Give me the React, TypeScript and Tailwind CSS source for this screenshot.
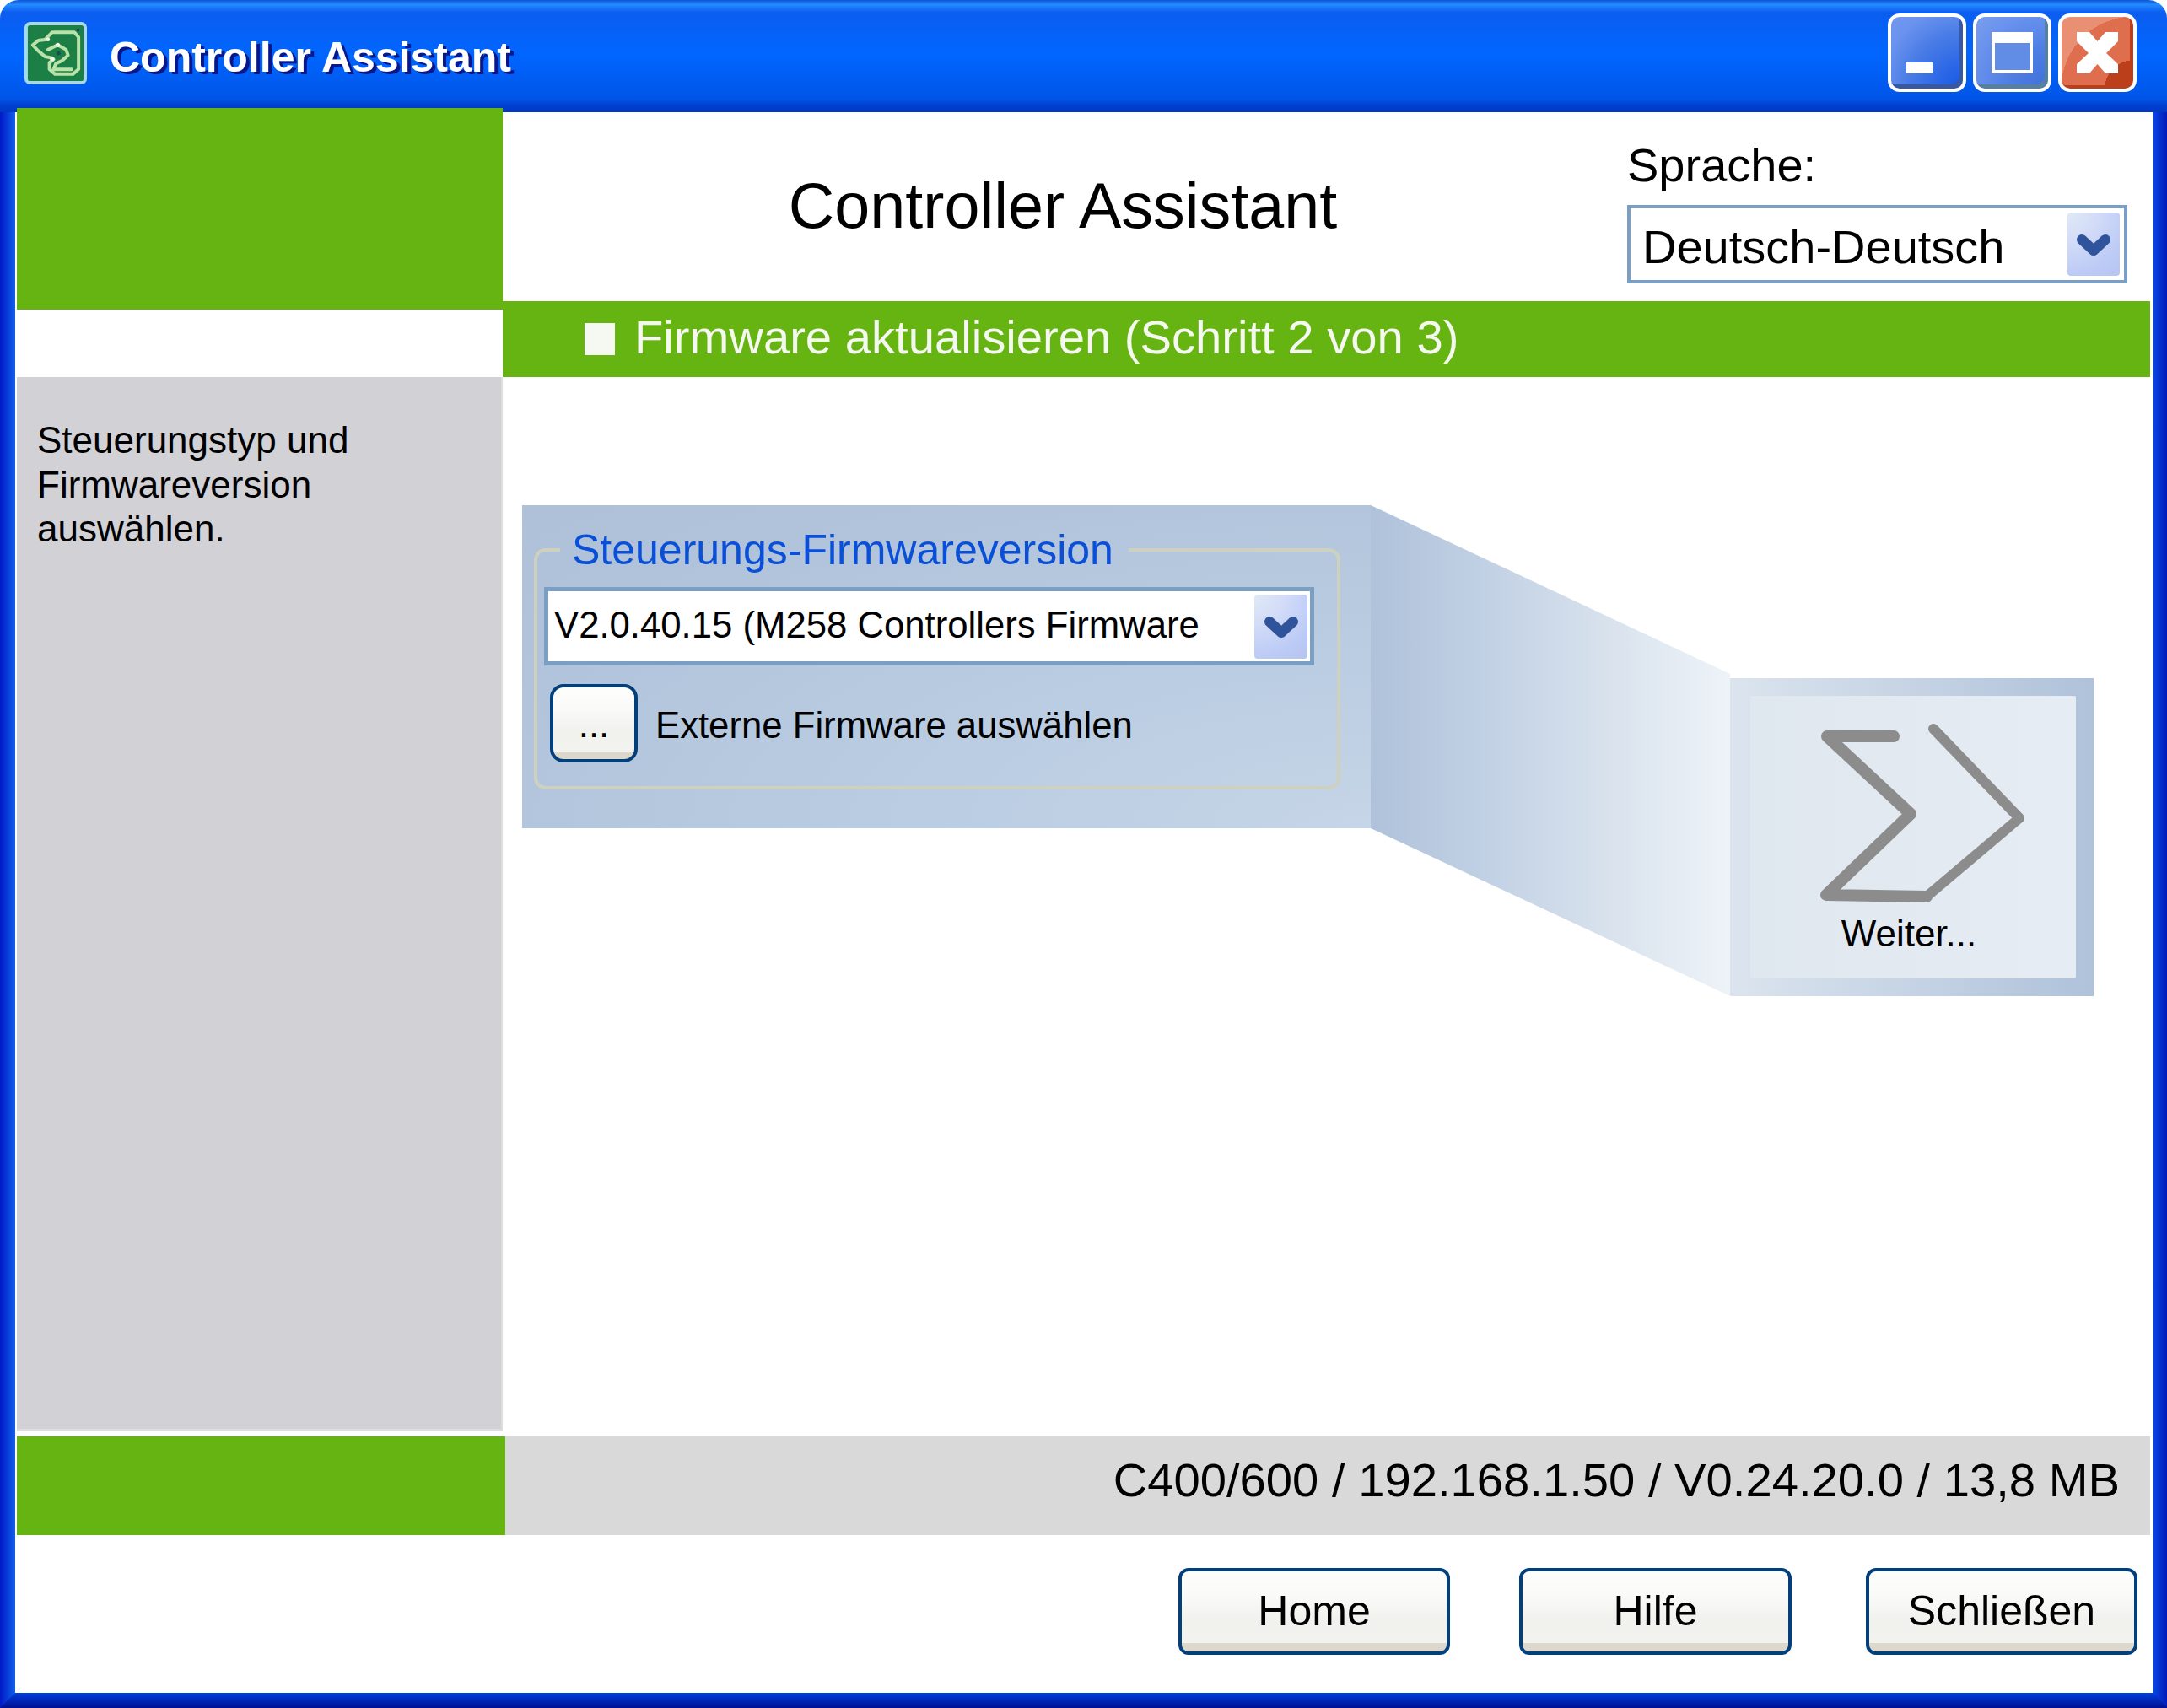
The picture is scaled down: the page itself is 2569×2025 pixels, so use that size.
import React from "react";

const Chevron = () => (
  <svg width="42" height="28" viewBox="0 0 42 28" fill="none">
    <path d="M7 8 L21 21 L35 8" stroke="#30549c" strokeWidth="12" strokeLinejoin="round" strokeLinecap="round" />
  </svg>
);

const AppIcon = () => (
  <svg width="74" height="74" viewBox="25 25 225 225" fill="none">
    <rect x="31" y="31" width="213" height="213" rx="14" fill="#1c7f45" stroke="#a6d8ea" strokeWidth="12" />
    <g stroke="#b9e2a8" strokeWidth="12" strokeLinejoin="round" strokeLinecap="round">
      <path d="M100 88 L125 62 L205 62 L220 80 L220 195 L200 213 L135 213 L115 195 L115 172 L130 160" />
      <path d="M105 88 L75 92 L55 108 L75 130 L100 150 L125 155" />
      <path d="M110 125 L145 108 L175 125 L182 145 L160 165 L138 175 L130 196 L195 196" />
    </g>
    <circle cx="148" cy="138" r="7" fill="#1a4d5a" />
    <circle cx="218" cy="54" r="6" fill="#1a4d5a" />
    <circle cx="110" cy="88" r="7" fill="#eef8e8" />
    <circle cx="145" cy="108" r="8" fill="#eef8e8" />
    <circle cx="125" cy="158" r="8" fill="#eef8e8" />
  </svg>
);

const WindowButton = ({ className, children }: { className: string; children: React.ReactNode }) => (
  <div className={`box-border flex h-[93px] w-[93px] rounded-[14px] border-[4px] border-white ${className}`}>{children}</div>
);

const ActionButton = ({ label, width }: { label: string; width: string }) => (
  <button
    className={`box-border flex h-[103px] ${width} items-center justify-center rounded-[12px] border-[4px] border-[#033f7a] bg-[linear-gradient(180deg,#fdfdfc_0%,#fafaf8_30%,#f1f2ee_60%,#f2f2ee_89%,#ddd8ce_90%,#ddd8ce_100%)] pb-[2px] text-[50px] leading-none text-black`}
  >
    {label}
  </button>
);

export default function App() {
  return (
    <div className="flex h-[2025px] w-[2569px] flex-col overflow-hidden bg-white font-['Liberation_Sans',Arial,sans-serif] text-black">
      {/* title bar */}
      <div className="flex h-[133px] shrink-0 items-center rounded-t-[22px] bg-[linear-gradient(180deg,#0b55d8_0%,#258bff_4%,#0c5df0_11%,#0066ff_48%,#0055e8_88%,#0040d0_94%,#0038c4_100%)] pb-[8px] pl-[29px] pr-[36px]">
        <AppIcon />
        <span className="ml-[27px] mt-[11px] text-[50px] font-bold leading-none text-white [text-shadow:4px_3px_0_#08188c]">
          Controller Assistant
        </span>
        <div className="ml-auto flex gap-[8px]">
          <WindowButton className="items-end bg-[radial-gradient(circle_at_100%_100%,#1558e6_0%,#2c68e6_25%,#4a7ce6_55%,#6a92ee_80%,#7598f0_100%)] pb-[18px] pl-[18px] shadow-[inset_-4px_-5px_0_#38599f]">
            <div className="h-[13px] w-[31px] bg-white" />
          </WindowButton>
          <WindowButton className="items-start justify-center bg-[radial-gradient(circle_at_100%_100%,#3f70da_0%,#4f7fe4_40%,#6a92ee_75%,#7b9ded_100%)] pt-[18px] shadow-[inset_-4px_-5px_0_#56809f]">
            <div className="box-border h-[49px] w-[49px] border-[4px] border-t-[13px] border-white bg-[#628de6]" />
          </WindowButton>
          <WindowButton className="items-start justify-center bg-[radial-gradient(circle_at_100%_100%,#bc3f1c_0%,#bc3f1c_28%,#df6e4e_28%,#df6e4e_71%,#e88f74_71%,#e88f74_100%)] pt-[18px] shadow-[inset_-4px_-4px_0_#bc3f1c]">
            <svg width="49" height="49" viewBox="0 0 49 49">
              <polygon
                fill="#fff"
                points="0,0 15,0 24.5,11 34,0 49,0 49,11 35,25 49,38 49,49 34,49 24.5,38 15,49 0,49 0,38 14,25 0,11"
              />
            </svg>
          </WindowButton>
        </div>
      </div>

      <div className="flex flex-1">
        <div className="w-[18px] shrink-0 bg-[linear-gradient(90deg,#0018c8,#1060ea)]" />

        <div className="flex w-[2534px] shrink-0 flex-col">
          {/* header */}
          <div className="flex h-[314px] shrink-0">
            <div className="relative z-10 ml-[2px] mt-[-5px] h-[239px] w-[576px] shrink-0 bg-[#65b412]" />
            <div className="flex w-[1956px] flex-col">
              <div className="flex h-[224px] shrink-0">
                <div className="flex w-[1328px] items-center justify-center text-[75.5px] leading-none">
                  Controller Assistant
                </div>
                <div className="ml-[5px] flex flex-col">
                  <div className="pt-[31px] text-[56px] leading-[64px]">Sprache:</div>
                  <div className="mt-[15px] box-border flex h-[93px] w-[593px] items-center border-[4px] border-[#7a9fc3] bg-white pl-[14px] pr-[5px]">
                    <span className="mt-[7px] flex-1 text-[56px] leading-none">Deutsch-Deutsch</span>
                    <div className="flex h-[75px] w-[62px] items-center justify-center rounded-[4px] bg-[radial-gradient(circle_at_0%_0%,#dfe9f5_0%,#d3dcf8_35%,#bccbf6_75%,#b5c5ee_100%)]">
                      <Chevron />
                    </div>
                  </div>
                </div>
              </div>
              <div className="flex h-[90px] w-[1953px] items-center gap-[23px] bg-[#65b412] pl-[97px] text-[56.2px] leading-none text-[#f4f8ee]">
                <div className="h-[38px] w-[36px] bg-[#f6f8f2]" />
                <span className="mb-[3px]">Firmware aktualisieren (Schritt 2 von 3)</span>
              </div>
            </div>
          </div>

          {/* body */}
          <div className="flex h-[1249px] shrink-0">
            <div className="ml-[2px] box-border w-[576px] shrink-0 border-b-[2px] border-r-[2px] border-[#dededf] bg-[#d2d1d6] pl-[24px] pr-[24px] pt-[49px] text-[44px] leading-[52.5px]">
              Steuerungstyp und Firmwareversion auswählen.
            </div>
            <div className="flex items-start pl-[23px] pt-[152px]">
              <div className="box-border h-[383px] w-[1006px] shrink-0 bg-[radial-gradient(ellipse_at_100%_100%,#c6d5e7_0%,#b8cbe1_45%,#b0c3da_80%,#aec1d9_100%)] pl-[14px] pt-[25px]">
                <fieldset className="box-border w-[956px] rounded-[14px] border-[4px] border-[#cfd1c0] pb-[28px] pl-[8px]">
                  <legend className="ml-[19px] pl-[14px] pr-[18px] text-[50px] leading-[56px] text-[#0a4fd8]">
                    Steuerungs-Firmwareversion
                  </legend>
                  <div className="mt-[16px] box-border flex h-[93px] w-[913px] items-center border-[5px] border-[#7a9fc3] bg-white pl-[7px] pr-[3px]">
                    <span className="mb-[3px] flex-1 text-[43.7px] leading-none">V2.0.40.15 (M258 Controllers Firmware</span>
                    <div className="flex h-[76px] w-[63px] items-center justify-center rounded-[4px] bg-[radial-gradient(circle_at_0%_0%,#dfe9f5_0%,#d3dcf8_35%,#bccbf6_75%,#b5c5ee_100%)]">
                      <Chevron />
                    </div>
                  </div>
                  <div className="ml-[7px] mt-[22px] flex items-center">
                    <button className="box-border flex h-[93px] w-[104px] items-center justify-center rounded-[16px] border-[4px] border-[#033f7a] bg-[linear-gradient(180deg,#fdfdfc_0%,#fafaf8_30%,#f1f2ee_60%,#f2f2ee_89%,#ddd8ce_90%,#ddd8ce_100%)] pt-[2px] text-[44px] leading-none text-black">
                      ...
                    </button>
                    <span className="ml-[21px] mt-[5px] text-[43.7px] leading-none">Externe Firmware auswählen</span>
                  </div>
                </fieldset>
              </div>
              <svg width="426" height="582" viewBox="0 0 426 582" className="shrink-0">
                <defs>
                  <linearGradient id="funnel" x1="0" y1="0" x2="1" y2="0">
                    <stop offset="0" stopColor="#afc2da" />
                    <stop offset="0.35" stopColor="#c3d2e5" />
                    <stop offset="0.7" stopColor="#dbe4ee" />
                    <stop offset="1" stopColor="#eef3f8" />
                  </linearGradient>
                </defs>
                <polygon points="0,0 426,200 426,582 0,383" fill="url(#funnel)" />
              </svg>
              <div className="mt-[205px] box-border flex h-[377px] w-[431px] shrink-0 items-start bg-[linear-gradient(90deg,#dbe4ee,#afc2da)] pl-[24px] pt-[21px]">
                <div className="flex h-[335px] w-[386px] flex-col items-center rounded-[2px] bg-[linear-gradient(90deg,#dfe7ef,#e6ecf3)]">
                  <svg width="386" height="260" viewBox="0 0 386 260" fill="none" className="shrink-0">
                    <path
                      d="M170 48 L91 48 L190 140 L90 236 L209 238"
                      stroke="#8c8c8c"
                      strokeWidth="14"
                      strokeLinejoin="round"
                      strokeLinecap="round"
                    />
                    <path
                      d="M209 238 L319 145 L217 39"
                      stroke="#8c8c8c"
                      strokeWidth="12"
                      strokeLinejoin="round"
                      strokeLinecap="round"
                    />
                  </svg>
                  <span className="mr-[10px] text-[44px] leading-none">Weiter...</span>
                </div>
              </div>
            </div>
          </div>

          {/* status */}
          <div className="mt-[7px] flex h-[117px] shrink-0">
            <div className="ml-[2px] w-[579px] shrink-0 bg-[#65b412]" />
            <div className="flex w-[1950px] items-start justify-end bg-[#d9d9d9] pr-[36px] pt-[19px] text-[56.2px] leading-[66px]">
              C400/600 / 192.168.1.50 / V0.24.20.0 / 13,8 MB
            </div>
          </div>

          {/* footer */}
          <div className="flex flex-1 items-start justify-end pr-[18px] pt-[39px]">
            <ActionButton label="Home" width="w-[322px]" />
            <div className="w-[82px]" />
            <ActionButton label="Hilfe" width="w-[323px]" />
            <div className="w-[88px]" />
            <ActionButton label="Schließen" width="w-[322px]" />
          </div>

          <div className="relative z-10 -mx-[18px] h-[18px] shrink-0 bg-[linear-gradient(180deg,#0040e0,#000f90)] [clip-path:polygon(0_100%,18px_0,calc(100%-17px)_0,100%_100%)]" />
        </div>

        <div className="w-[17px] shrink-0 bg-[linear-gradient(90deg,#0a46e4,#001cb8)]" />
      </div>
    </div>
  );
}
